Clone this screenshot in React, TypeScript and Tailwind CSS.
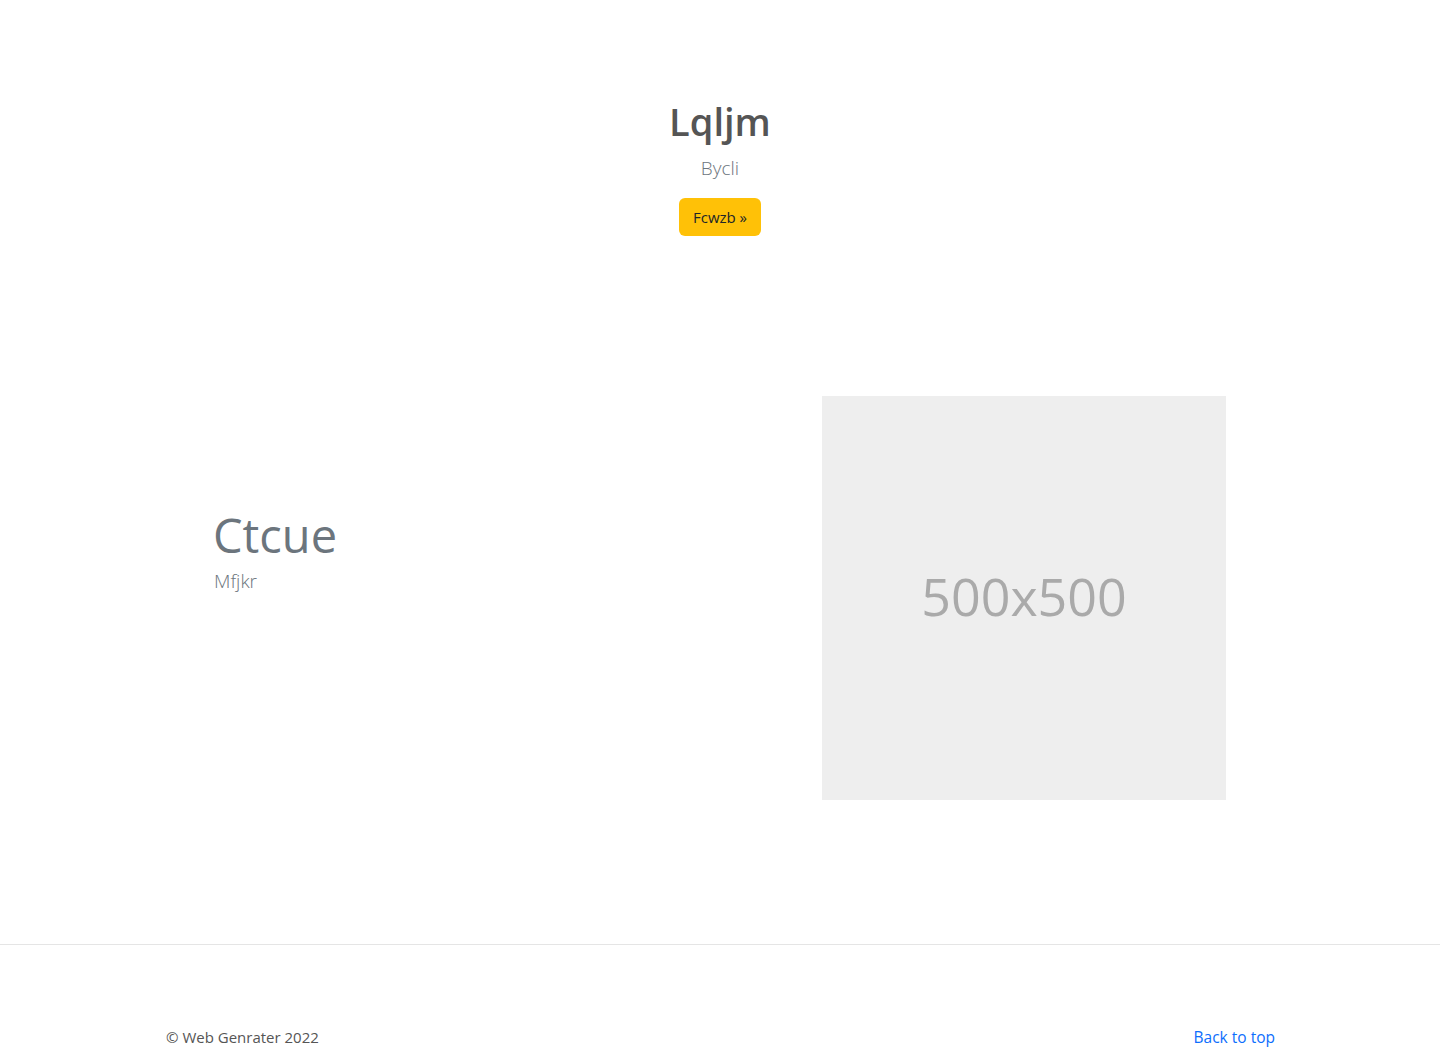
export default function App() {
    return (
        <div className="min-h-[1049px] bg-white font-['Open_Sans',sans-serif] text-[#212529]">
            <section className="pt-[97px] text-center">
                <h1 className="text-[38px] font-semibold leading-[48px] text-[#555555]">Lqljm</h1>
                <p className="mt-[8px] text-[19px] font-light leading-[30px] text-[#6c757d]">Bycli</p>
                <div className="mt-[15px]">
                    <button className="h-[38px] w-[82px] rounded-md bg-[#ffc107] text-[15px] text-[#212529]">
                        Fcwzb »
                    </button>
                </div>
            </section>

            <section className="mx-auto mt-[160px] flex w-[1140px]">
                <div className="w-[672px] pl-[63px] pt-[108px]">
                    <h2 className="text-[47px] font-normal leading-[62px] text-[#6c757d]">Ctcue</h2>
                    <p className="pl-px text-[19px] font-light leading-[30px] text-[#6c757d]">Mfjkr</p>
                </div>
                <div className="flex h-[404px] w-[404px] items-center justify-center bg-[#eeeeee] pb-1">
                    <span className="text-[52px] leading-none text-[#aaaaaa]">500x500</span>
                </div>
            </section>

            <hr className="mt-[144px] border-t border-[#e5e5e5]" />

            <footer className="mx-auto flex w-[1140px] items-center justify-between pl-4 pr-[15px] pt-[80px] leading-6">
                <p className="text-[15px] text-[#555555]">© Web Genrater 2022</p>
                <a href="#" className="text-[15.5px] text-[#0d6efd]">Back to top</a>
            </footer>
        </div>
    );
}
